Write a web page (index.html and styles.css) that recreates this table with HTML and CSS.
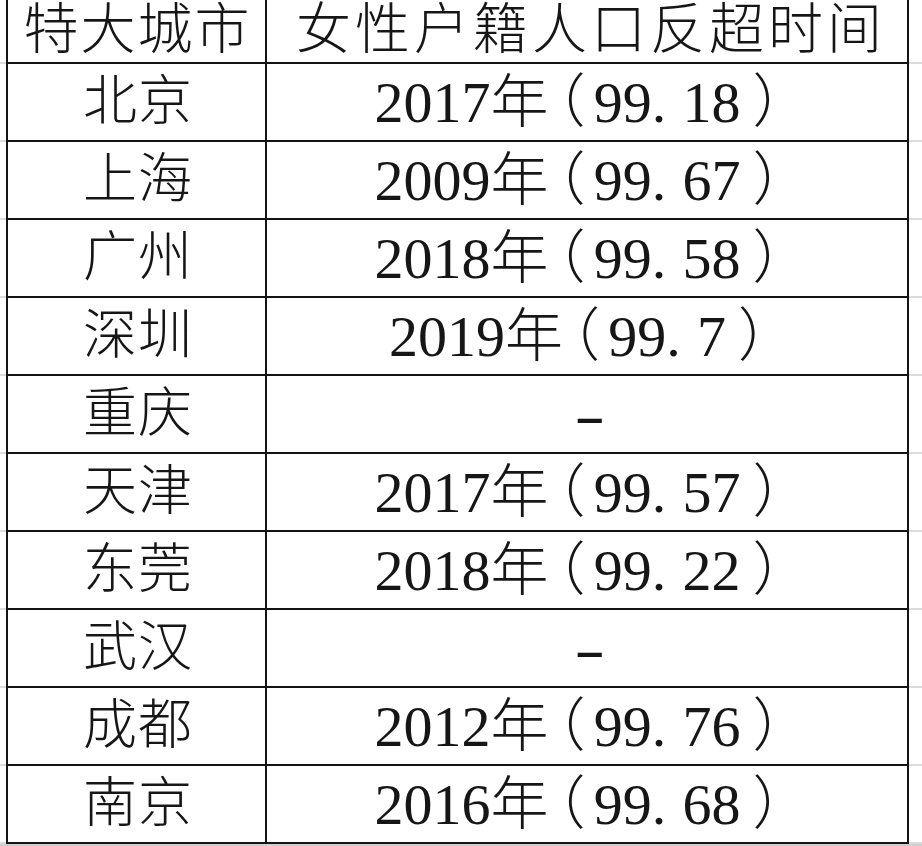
FILE: index.html
```html
<!DOCTYPE html>
<html lang="zh-CN">
<head>
<meta charset="utf-8">
<title>特大城市 女性户籍人口反超时间</title>
<link rel="stylesheet" href="styles.css">
</head>
<body>
<div class="sheet">
  <div class="gutter gutter-left">
    <div></div><div></div><div></div><div></div><div></div><div></div><div></div><div></div><div></div><div></div><div></div>
  </div>
  <div class="table">
    <div class="cell head">特大城市</div>
    <div class="cell head head-wide">女性户籍人口反超时间</div>

    <div class="cell city">北京</div>
    <div class="cell val">2017年<span class="lp">（</span>99<span class="dot">.</span>18<span class="rp">）</span></div>

    <div class="cell city">上海</div>
    <div class="cell val">2009年<span class="lp">（</span>99<span class="dot">.</span>67<span class="rp">）</span></div>

    <div class="cell city">广州</div>
    <div class="cell val">2018年<span class="lp">（</span>99<span class="dot">.</span>58<span class="rp">）</span></div>

    <div class="cell city">深圳</div>
    <div class="cell val">2019年<span class="lp">（</span>99<span class="dot">.</span>7<span class="rp">）</span></div>

    <div class="cell city">重庆</div>
    <div class="cell val"><span class="dash">-</span></div>

    <div class="cell city">天津</div>
    <div class="cell val">2017年<span class="lp">（</span>99<span class="dot">.</span>57<span class="rp">）</span></div>

    <div class="cell city">东莞</div>
    <div class="cell val">2018年<span class="lp">（</span>99<span class="dot">.</span>22<span class="rp">）</span></div>

    <div class="cell city">武汉</div>
    <div class="cell val"><span class="dash">-</span></div>

    <div class="cell city">成都</div>
    <div class="cell val">2012年<span class="lp">（</span>99<span class="dot">.</span>76<span class="rp">）</span></div>

    <div class="cell city">南京</div>
    <div class="cell val">2016年<span class="lp">（</span>99<span class="dot">.</span>68<span class="rp">）</span></div>
  </div>
  <div class="gutter gutter-right">
    <div></div><div></div><div></div><div></div><div></div><div></div><div></div><div></div><div></div><div></div><div></div>
  </div>
</div>
<div class="strip"></div>
</body>
</html>
```

FILE: styles.css
```css
html, body {
  margin: 0;
  padding: 0;
  background: #ffffff;
}

body {
  width: 922px;
  height: 846px;
  overflow: hidden;
  font-family: "Liberation Serif", "Noto Sans CJK SC", serif;
  color: #161616;
}

.sheet {
  display: flex;
  align-items: flex-start;
}

.gutter {
  display: grid;
  grid-template-rows: 62px repeat(10, 76px);
  row-gap: 2px;
  padding-bottom: 2px;
  background: #dcdcdc;
}

.gutter > div {
  background: #ffffff;
}

.gutter-left {
  width: 6px;
}

.gutter-right {
  flex: 1;
}

.table {
  display: grid;
  grid-template-columns: 257px 640px;
  grid-template-rows: 62px repeat(10, 76px);
  gap: 2px;
  background: #141414;
  border: 2px solid #141414;
  border-top: 0;
}

.cell {
  background: #ffffff;
  text-align: center;
  white-space: nowrap;
  font-weight: 300;
  line-height: 76px;
}

.head {
  font-size: 55px;
  line-height: 60px;
  letter-spacing: 2px;
  padding-left: 2px;
}

.head-wide {
  letter-spacing: 4px;
  padding-left: 8px;
}

.city {
  font-size: 54px;
  line-height: 76px;
  letter-spacing: 1px;
  padding-left: 3px;
}

.val {
  font-size: 58px;
  line-height: 78px;
  padding-right: 18px;
}

.lp,
.rp {
  font-feature-settings: "halt" 1;
}

.lp {
  margin-left: 8px;
  margin-right: 8px;
}

.rp {
  margin-left: 12px;
}

.dot {
  letter-spacing: 0.28em;
}

.dash {
  display: inline-block;
  transform: scaleX(1.6);
  margin-left: 24px;
}

.strip {
  height: 2px;
  background: #cfcfcf;
}
```
